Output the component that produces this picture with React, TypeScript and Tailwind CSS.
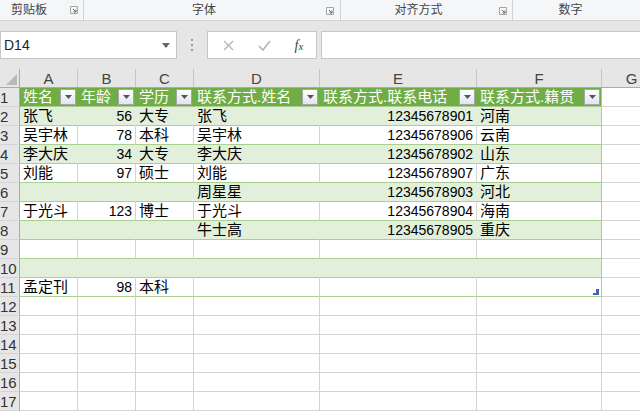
import React from "react";

const cols = [
  { key: "A", w: "w-[58px]" },
  { key: "B", w: "w-[58px]" },
  { key: "C", w: "w-[58px]" },
  { key: "D", w: "w-[126px]" },
  { key: "E", w: "w-[157px]" },
  { key: "F", w: "w-[125px]" },
  { key: "G", w: "w-[60px]" },
];

const header = ["姓名", "年龄", "学历", "联系方式.姓名", "联系方式.联系电话", "联系方式.籍贯"];

const rows: (string | number)[][] = [
  ["张飞", 56, "大专", "张飞", 12345678901, "河南"],
  ["吴宇林", 78, "本科", "吴宇林", 12345678906, "云南"],
  ["李大庆", 34, "大专", "李大庆", 12345678902, "山东"],
  ["刘能", 97, "硕士", "刘能", 12345678907, "广东"],
  ["", "", "", "周星星", 12345678903, "河北"],
  ["于光斗", 123, "博士", "于光斗", 12345678904, "海南"],
  ["", "", "", "牛士高", 12345678905, "重庆"],
  ["", "", "", "", "", ""],
  ["", "", "", "", "", ""],
  ["孟定刊", 98, "本科", "", "", ""],
];

const font = "font-['Liberation_Sans','Noto_Sans_CJK_SC',sans-serif]";

function Launcher() {
  return (
    <svg width="8" height="8" viewBox="0 0 8 8" className="shrink-0">
      <path d="M0.5 0.5h7v7h-7z" fill="none" stroke="#a6a6a6" />
      <path d="M3 3l3 3M6 3.5v2.5h-2.5" fill="none" stroke="#666" />
    </svg>
  );
}

function Ribbon() {
  return (
    <div className={`flex h-[21px] border-b border-[#d4d4d4] bg-[#f4f6f7] text-[12px] text-[#444] ${font}`}>
      <div className="flex w-[84px] items-center border-r border-[#d0d0d0] pl-[11px] pr-[5px]">
        <span className="flex-1">剪贴板</span>
        <Launcher />
      </div>
      <div className="relative flex w-[257px] items-center justify-center border-r border-[#d0d0d0]">
        <span className="-translate-x-[8px]">字体</span>
        <div className="absolute right-[6px] top-[7px]"><Launcher /></div>
      </div>
      <div className="relative flex w-[172px] items-center justify-center border-r border-[#d0d0d0]">
        <span className="-translate-x-[8px]">对齐方式</span>
        <div className="absolute right-[5px] top-[7px]"><Launcher /></div>
      </div>
      <div className="flex flex-1 items-center justify-center">
        <span className="-translate-x-[6px]">数字</span>
      </div>
    </div>
  );
}

function FormulaBar() {
  return (
    <div className="flex h-[48px] items-start bg-[#e6e6e6] pt-[10px]">
      <div className={`flex h-[28px] w-[177px] items-center border border-[#c6c6c6] bg-white pl-[3px] pr-[6px] text-[14px] text-[#222] ${font}`}>
        <span className="flex-1">D14</span>
        <svg width="8" height="5" viewBox="0 0 8 5"><path d="M0 0h8L4 5z" fill="#666" /></svg>
      </div>
      <div className="flex h-[28px] w-[30px] flex-col items-center justify-center gap-[3px]">
        <div className="h-[2px] w-[2px] bg-[#999]" />
        <div className="h-[2px] w-[2px] bg-[#999]" />
        <div className="h-[2px] w-[2px] bg-[#999]" />
      </div>
      <div className="flex h-[28px] w-[110px] items-center border border-[#c6c6c6] bg-white">
        <div className="flex w-[38px] justify-center pl-[2px]">
          <svg width="11" height="11" viewBox="0 0 11 11"><path d="M1 1l9 9M10 1l-9 9" stroke="#b3b3b3" strokeWidth="1.3" /></svg>
        </div>
        <div className="flex w-[36px] justify-center">
          <svg width="13" height="11" viewBox="0 0 13 11"><path d="M1 6l4 4 7-9" fill="none" stroke="#b3b3b3" strokeWidth="1.5" /></svg>
        </div>
        <div className="flex w-[34px] justify-center">
          <span className="font-['Liberation_Serif',serif] text-[14px] italic text-[#444]">
            f<span className="text-[11px]">x</span>
          </span>
        </div>
      </div>
      <div className="ml-[4px] h-[28px] flex-1 border border-r-0 border-[#c6c6c6] bg-white" />
    </div>
  );
}

function Filter() {
  return (
    <div className="absolute right-[1px] top-[1px] flex h-[16px] w-[16px] items-center justify-center border border-[#a6a6a6] bg-gradient-to-b from-white to-[#dfe6ee]">
      <svg width="7" height="4" viewBox="0 0 7 4"><path d="M0 0h7L3.5 4z" fill="#555" /></svg>
    </div>
  );
}

function ColumnHeader() {
  return (
    <div className={`flex h-[19px] border-b border-[#ababab] bg-[#e6e6e6] text-[15px] text-[#444] ${font}`}>
      <div className="relative w-[20px] shrink-0 border-r border-[#ababab]">
        <svg className="absolute bottom-[2px] right-[2px]" width="11" height="11" viewBox="0 0 11 11"><path d="M11 0v11H0z" fill="#b9b9b9" /></svg>
      </div>
      {cols.map((c) => (
        <div key={c.key} className={`${c.w} flex shrink-0 items-center justify-center border-r border-[#c6c6c6] leading-none`}>
          {c.key}
        </div>
      ))}
    </div>
  );
}

function RowNum({ n }: { n: number }) {
  return (
    <div className={`flex w-[20px] shrink-0 items-center border-b border-r border-b-[#d4d4d4] border-r-[#ababab] bg-[#e6e6e6] text-[15px] leading-none text-[#333] ${font}`}>
      {n}
    </div>
  );
}

export default function App() {
  const body: React.ReactNode[] = [];

  // header row of the table
  body.push(
    <div key="r1" className="flex h-[19px]">
      <RowNum n={1} />
      {header.map((h, i) => (
        <div
          key={i}
          className={`${cols[i].w} relative flex shrink-0 items-center overflow-hidden whitespace-nowrap border-b border-r border-b-[#a9d08e] ${i === 5 ? "border-r-[#a9d08e]" : "border-r-[#70ad47]"} bg-[#70ad47] pl-[3px] text-[15px] text-white ${font}`}
        >
          {h}
          <Filter />
        </div>
      ))}
      <div className={`${cols[6].w} shrink-0 border-b border-r border-[#d4d4d4]`} />
    </div>
  );

  rows.forEach((r, ri) => {
    const n = ri + 2;
    const band = n % 2 === 0;
    body.push(
      <div key={n} className="flex h-[19px]">
        <RowNum n={n} />
        {r.map((v, i) => {
          const num = typeof v === "number";
          const rb = i === 5 ? "border-r-[#a9d08e]" : band ? "border-r-[#e2efda]" : "border-r-[#d4d4d4]";
          return (
            <div
              key={i}
              className={`${cols[i].w} relative flex shrink-0 items-center overflow-visible whitespace-nowrap border-b border-r border-b-[#a9d08e] ${rb} ${band ? "bg-[#e2efda]" : "bg-white"} ${num ? "justify-end pr-[3px] text-[14px]" : "pl-[3px] text-[15px]"} text-black ${font}`}
            >
              {v}
              {n === 11 && i === 5 && (
                <div className="absolute bottom-[1px] right-[2px] h-[6px] w-[6px]">
                  <div className="absolute bottom-0 right-0 h-[4px] w-[6px] bg-[#4a5fb5]" />
                  <div className="absolute bottom-0 right-0 h-[6px] w-[3px] bg-[#4a5fb5]" />
                  <div className="absolute bottom-[2px] left-0 h-[2px] w-[3px] bg-white" />
                </div>
              )}
            </div>
          );
        })}
        <div className={`${cols[6].w} shrink-0 border-b border-r border-[#d4d4d4]`} />
      </div>
    );
  });

  for (let n = 12; n <= 17; n++) {
    body.push(
      <div key={n} className="flex h-[19px]">
        <RowNum n={n} />
        {cols.map((c) => (
          <div key={c.key} className={`${c.w} shrink-0 border-b border-r border-[#d4d4d4] bg-white`} />
        ))}
      </div>
    );
  }

  return (
    <div className="h-[411px] w-[640px] overflow-hidden bg-white">
      <Ribbon />
      <FormulaBar />
      <ColumnHeader />
      {body}
    </div>
  );
}
